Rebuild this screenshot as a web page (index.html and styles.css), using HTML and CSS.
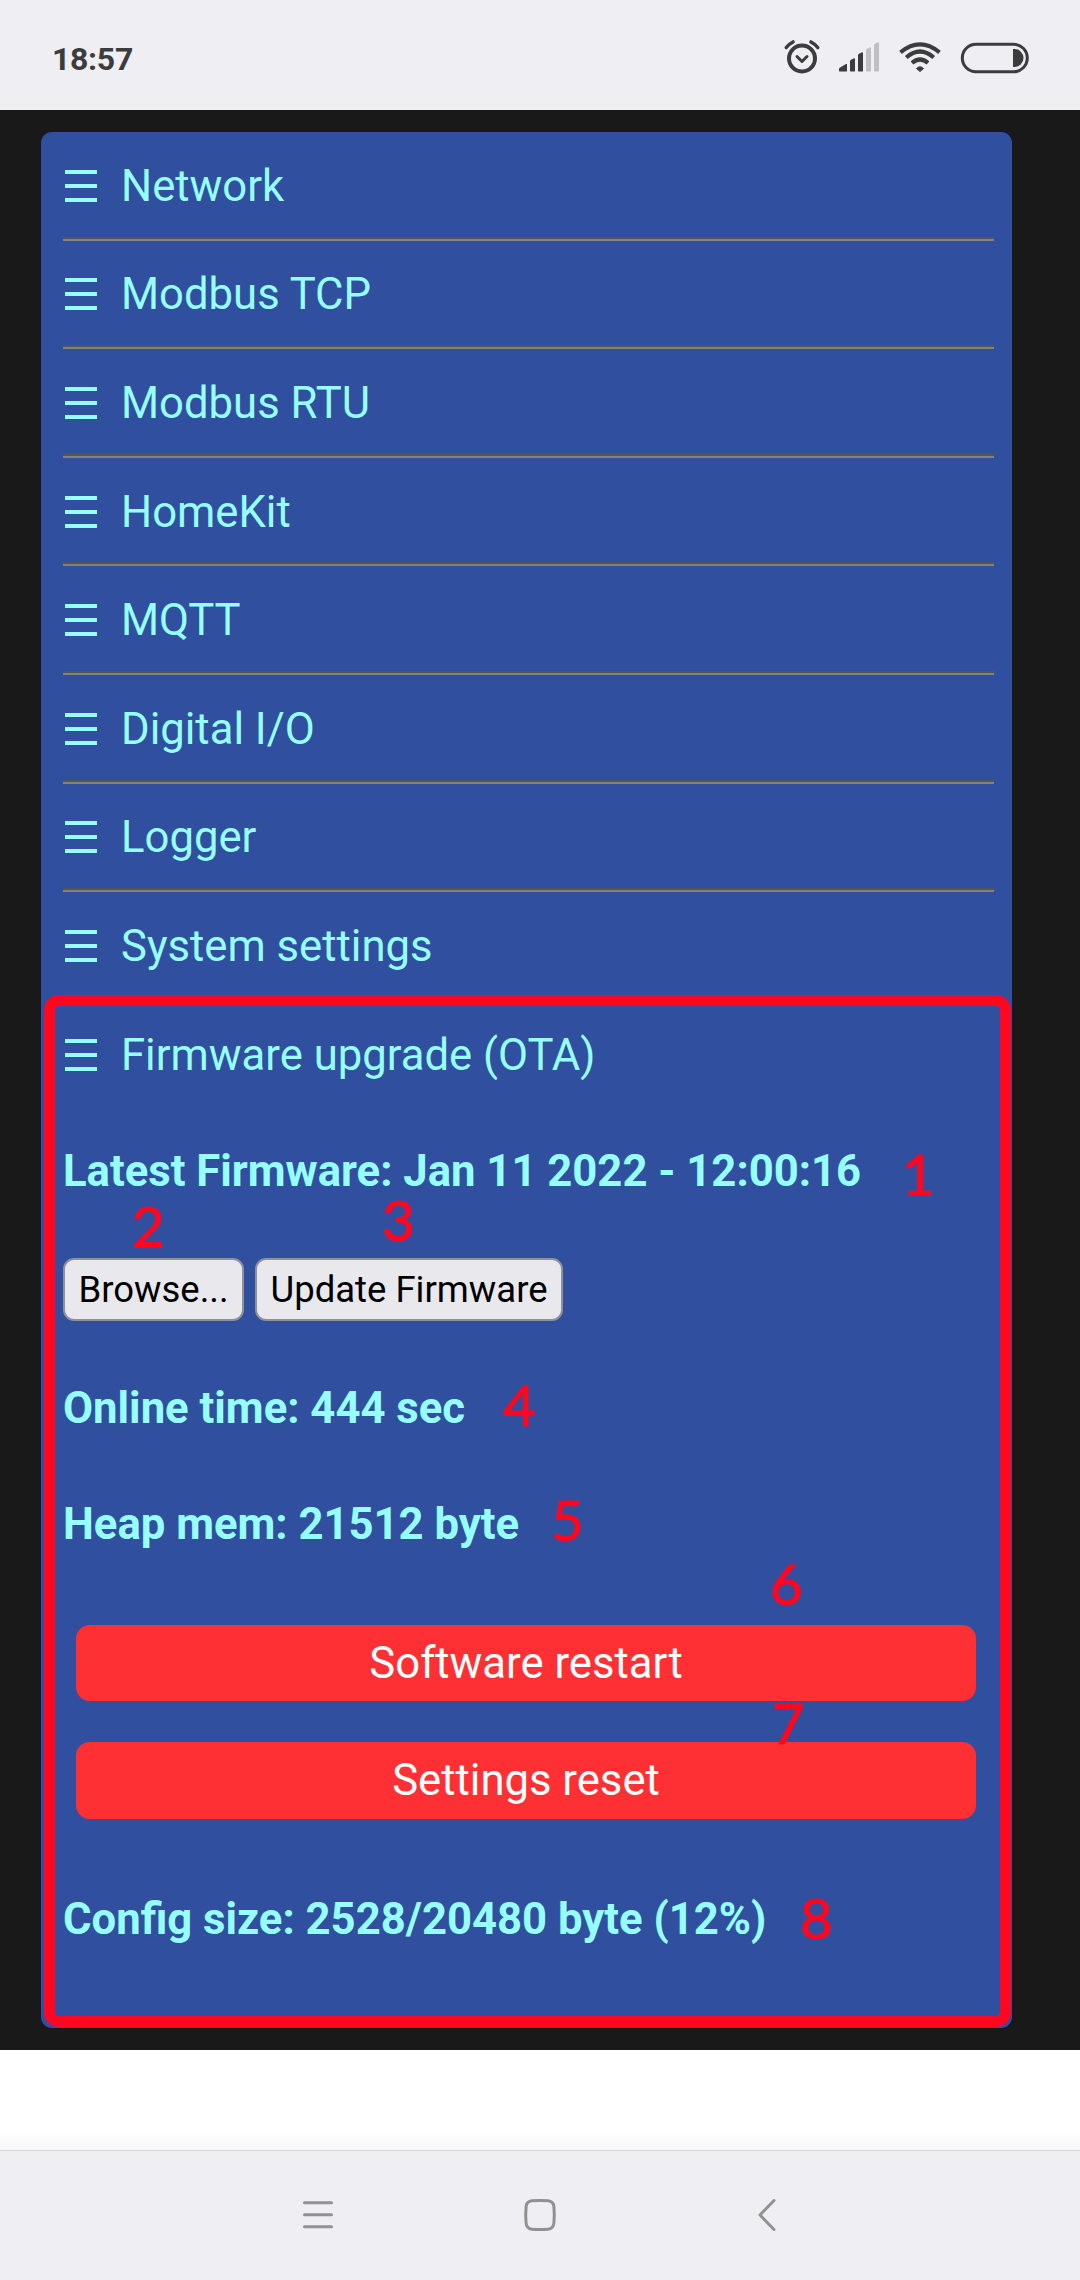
FILE: index.html
```html
<!DOCTYPE html>
<html lang="en">
<head>
<meta charset="utf-8">
<title>Device settings</title>
<link rel="stylesheet" href="styles.css">
</head>
<body>
<header class="status">
  <span class="clock">18:57</span>
  <svg class="status-icons" width="250" height="40" viewBox="780 38 250 40" fill="none" stroke="#3c3c3e">
    <circle cx="802" cy="58.5" r="13" stroke-width="4"/>
    <path d="M797 56.500l5 5 5-5" stroke-width="3" stroke-linecap="round" stroke-linejoin="round"/>
    <path d="M786.300 47.500Q789 44 793 42M817.700 47.500Q815 44 811 42" stroke-width="3.600" stroke-linecap="round"/>
    <g stroke="none" fill="#3c3c3e">
      <path d="M839 71v-2q0-1 1-1.500l6-3.500h1v7q0 .6-.6.600h-6.800zM850 71V61q0-.7.600-1l3.400-1.800q1 0 1 1V71q0 .6-.6.600h-3.800zM858 71V55q0-.7.600-1l3.400-1.800q1 0 1 1V71q0 .6-.6.600h-3.800z"/>
      <path fill="#c0c0c4" d="M866 71V50q0-.7.600-1l3.400-1.800q1 0 1 1V71q0 .6-.6.600h-3.800zM874 71V45q0-.7.600-1l3.400-1.800q1 0 1 1V71q0 .6-.6.600h-3.800z"/>
      <path d="M920 71.500l-3.500-3q3.500-3.500 7 0z" stroke="#3c3c3e"/>
    </g>
    <path d="M900.500 52.300Q920 36.500 939.500 52.300M906.300 57.500Q920 45.500 933.700 57.500M912 63Q920 56 928 63" stroke-width="4.200"/>
    <rect x="962.300" y="44.300" width="65" height="27.500" rx="13.700" stroke-width="3"/>
    <path d="M1013 49h1.500a9 9 0 0 1 0 18H1013z" fill="#3c3c3e" stroke="none"/>
  </svg>
</header>
<main class="page">
  <div class="card">
    <nav class="menu">
      <a class="item"><i class="bars"></i>Network</a>
      <a class="item"><i class="bars"></i>Modbus TCP</a>
      <a class="item"><i class="bars"></i>Modbus RTU</a>
      <a class="item"><i class="bars"></i>HomeKit</a>
      <a class="item"><i class="bars"></i>MQTT</a>
      <a class="item"><i class="bars"></i>Digital I/O</a>
      <a class="item"><i class="bars"></i>Logger</a>
      <a class="item"><i class="bars"></i>System settings</a>
      <a class="item"><i class="bars"></i>Firmware upgrade (OTA)</a>
    </nav>
    <section class="panel">
      <p class="info">Latest Firmware: Jan 11 2022 - 12:00:16</p>
      <div class="upload">
        <button class="btn browse">Browse...</button>
        <button class="btn update">Update Firmware</button>
      </div>
      <p class="info">Online time: 444 sec</p>
      <p class="info heap">Heap mem: 21512 byte</p>
      <div class="actions">
        <button class="danger">Software restart</button>
        <button class="danger reset">Settings reset</button>
      </div>
      <p class="info">Config size: 2528/20480 byte (12%)</p>
    </section>
    <div class="frame"></div>
    <span class="mark m1">1</span>
    <span class="mark m2">2</span>
    <span class="mark m3">3</span>
    <span class="mark m4">4</span>
    <span class="mark m5">5</span>
    <span class="mark m6">6</span>
    <span class="mark m7">7</span>
    <span class="mark m8">8</span>
  </div>
</main>
<div class="blank"></div>
<footer class="navbar">
  <svg width="1080" height="129" viewBox="0 2151 1080 129" fill="none" stroke="#919191" stroke-width="3" stroke-linecap="round" stroke-linejoin="round">
    <path d="M304.500 2202.700h27M304.500 2214.700h27M304.500 2226.700h27"/>
    <path d="M532 2200.800q8-.6 16 0 5.500.5 5.900 6 .8 8.200 0 16.400-.4 5.500-5.900 6-8 .6-16 0-5.500-.5-5.900-6-.8-8.200 0-16.400.4-5.500 5.900-6z"/>
    <path d="M774 2200.500L760 2215l14 14.500"/>
  </svg>
</footer>
</body>
</html>
```
FILE: styles.css
```css
body { margin: 0; width: 1080px; height: 2280px; overflow: hidden; background: #fff; font-family: Roboto, sans-serif; }
.status { height: 110px; box-sizing: border-box; padding: 0 50px 0 52px; background: #efeef3; display: flex; justify-content: space-between; align-items: flex-start; }
.clock { margin-top: 39px; font-size: 32px; line-height: 40px; font-weight: 700; letter-spacing: -.3px; color: #3c3c3e; }
.status-icons { margin-top: 38px; }
.page { height: 1940px; box-sizing: border-box; padding: 22px 0 0 41px; background: #191919; }
.card { position: relative; width: 971px; height: 1896px; box-sizing: border-box; padding: 0 18px 0 22px; border-radius: 11px; background: #30509f; color: #96fffe; font-size: 43.650px; }
.item { display: flex; align-items: center; gap: 24px; height: 108.600px; box-sizing: border-box; padding: 5px 0 4px; line-height: 52px; }
.item:not(:nth-last-child(-n+2)) { background: linear-gradient(#555 2px, #828282 2px) left bottom / 100% 4px no-repeat; }
.bars { width: 32px; height: 32px; margin: 0 0 2px 2px; background: linear-gradient(currentColor 4px, transparent 4px 14px, currentColor 14px 18px, transparent 18px 28px, currentColor 28px); }
.panel { padding-top: 37px; display: flex; flex-direction: column; }
.info { margin: 0; font-weight: 700; line-height: 52px; white-space: nowrap; }
.upload { display: flex; gap: 11px; margin: 59.600px 0 62px; }
.btn { height: 63px; box-sizing: border-box; padding: 0; border: 2px solid #8f8f9d; border-radius: 11px; background: #e9e9ed; color: #000; font: 36.500px/57px Roboto, sans-serif; }
.browse { width: 181px; }
.update { width: 308px; }
.heap { margin-top: 64px; }
.actions { display: flex; flex-direction: column; gap: 41px; margin: 74px 18px 75.500px 13px; }
.danger { height: 76px; padding: 2px 0 0; border: 0; border-radius: 14px; background: #ff3034; color: #fff; font: 43.650px/74px Roboto, sans-serif; }
.reset { height: 77px; }
.frame { position: absolute; left: 3px; top: 863px; width: 967px; height: 1032px; box-sizing: border-box; border: 11px solid #ff0720; border-radius: 15px; }
.mark { position: absolute; color: #ff0720; font: 56.500px/60px Lato, sans-serif; -webkit-text-stroke: 1px #ff0720; }
.m1 { left: 861px; top: 1011px; }
.m2 { left: 91px; top: 1063px; }
.m3 { left: 341px; top: 1057px; }
.m4 { left: 462px; top: 1242px; }
.m5 { left: 510px; top: 1357px; }
.m6 { left: 729px; top: 1421px; }
.m7 { left: 731px; top: 1560px; }
.m8 { left: 759px; top: 1755px; }
.blank { height: 100px; background: linear-gradient(#fff 80%, #f7f7f7); }
.navbar { height: 130px; box-sizing: border-box; border-top: 1px solid #d6d6d8; background: #efeef3; }
.navbar svg { display: block; }
```
